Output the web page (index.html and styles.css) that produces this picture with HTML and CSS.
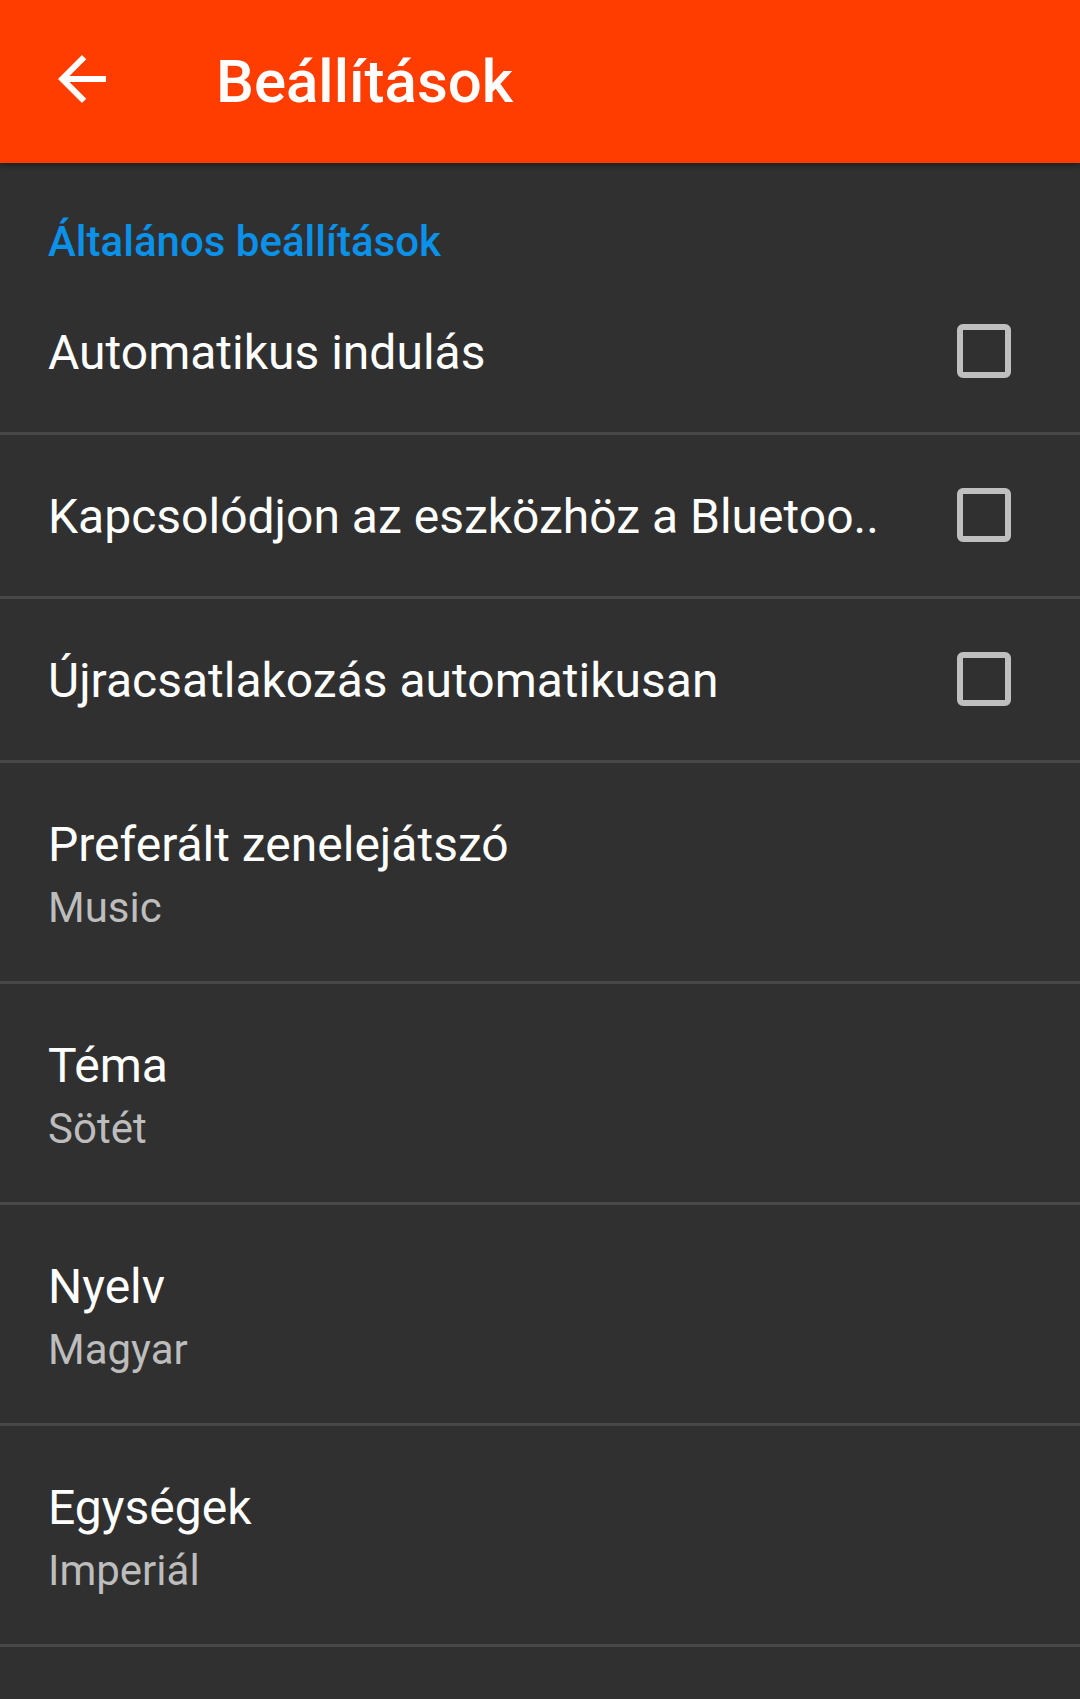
FILE: index.html
```html
<!DOCTYPE html>
<html lang="hu">
<head>
<meta charset="utf-8">
<title>Beállítások</title>
<link rel="stylesheet" href="styles.css">
</head>
<body>
<header class="appbar">
  <svg class="back" viewBox="0 0 24 24" width="72" height="72" aria-hidden="true">
    <path d="M20 11H7.83l5.59-5.59L12 4l-8 8 8 8 1.41-1.41L7.83 13H20v-2z" fill="#ffffff"/>
  </svg>
  <h1 class="appbar-title">Beállítások</h1>
</header>
<main class="prefs">
  <div class="category">Általános beállítások</div>
  <div class="row single">
    <div class="text"><div class="title">Automatikus indulás</div></div>
    <span class="checkbox"></span>
  </div>
  <div class="row single">
    <div class="text"><div class="title">Kapcsolódjon az eszközhöz a Bluetoo..</div></div>
    <span class="checkbox"></span>
  </div>
  <div class="row single">
    <div class="text"><div class="title">Újracsatlakozás automatikusan</div></div>
    <span class="checkbox"></span>
  </div>
  <div class="row double">
    <div class="text"><div class="title">Preferált zenelejátszó</div><div class="summary">Music</div></div>
  </div>
  <div class="row double">
    <div class="text"><div class="title">Téma</div><div class="summary">Sötét</div></div>
  </div>
  <div class="row double">
    <div class="text"><div class="title">Nyelv</div><div class="summary">Magyar</div></div>
  </div>
  <div class="row double">
    <div class="text"><div class="title">Egységek</div><div class="summary">Imperiál</div></div>
  </div>
</main>
</body>
</html>
```
FILE: styles.css
```css
* { box-sizing: border-box; }
html, body {
  margin: 0;
  padding: 0;
  background: #303030;
  font-family: Roboto, "Noto Sans", "Liberation Sans", sans-serif;
  color: #ffffff;
}
body { min-height: 1699px; }

.appbar {
  height: 163px;
  background: #ff3d00;
  display: flex;
  align-items: center;
  padding-left: 46px;
  box-shadow: 0 2px 6px rgba(0, 0, 0, 0.45);
  position: relative;
  z-index: 1;
}
.back {
  display: block;
  flex: none;
  margin-bottom: 5px;
}
.appbar-title {
  margin: 0 0 0 98px;
  font-size: 60px;
  font-weight: 500;
  line-height: normal;
  color: #ffffff;
}

.prefs { display: flex; flex-direction: column; }

.category {
  height: 108px;
  padding: 54px 48px 0;
  font-size: 42px;
  font-weight: 500;
  line-height: 49px;
  color: #0a91ea;
}

.row {
  display: flex;
  align-items: flex-start;
  padding: 48px 48px 0;
  border-bottom: 3px solid #484848;
}
.row.single { height: 164px; }
.row.double { height: 221px; }

.text { flex: 1; min-width: 0; }
.title {
  font-size: 48px;
  line-height: 68px;
  color: #ffffff;
  white-space: nowrap;
  overflow: hidden;
}
.summary {
  margin-top: 2px;
  font-size: 42px;
  line-height: 54px;
  color: #bdbdbd;
}

.checkbox {
  flex: none;
  align-self: flex-start;
  width: 54px;
  height: 54px;
  margin-top: 5px;
  margin-right: 21px;
  border: 6px solid #bfbfbf;
  border-radius: 6px;
}
```
